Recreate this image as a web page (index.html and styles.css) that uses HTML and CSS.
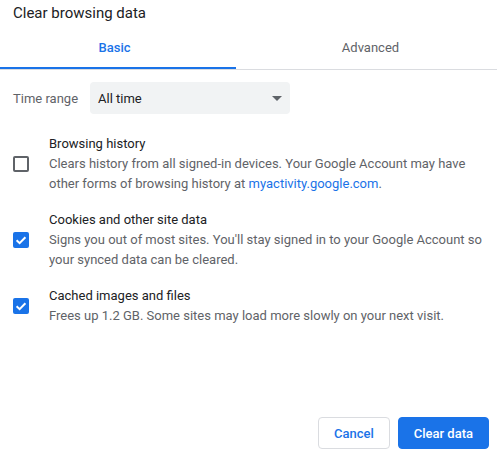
FILE: index.html
```html
<!DOCTYPE html>
<html>
<head>
<meta charset="utf-8">
<link rel="stylesheet" href="styles.css">
</head>
<body>
<div class="dialog">
  <div class="title">Clear browsing data</div>
  <div class="tabs">
    <div class="tab tab-basic active">Basic</div>
    <div class="tab tab-adv">Advanced</div>
  </div>
  <div class="content">
    <div class="time-row">
      <span class="time-label">Time range</span>
      <div class="select">
        <span>All time</span>
        <svg class="arrow" width="10" height="5" viewBox="0 0 10 5"><path d="M0 0h10L5 5z" fill="#5f6368"/></svg>
      </div>
    </div>
    <div class="item">
      <div class="cb"></div>
      <div class="text">
        <div class="item-title">Browsing history</div>
        <div class="desc">Clears history from all signed-in devices. Your Google Account may have other forms of browsing history at <span class="link">myactivity.google.com</span>.</div>
      </div>
    </div>
    <div class="item">
      <div class="cb checked"><svg width="16" height="16" viewBox="0 0 16 16"><path d="M3.6 8.2l3 2.9 5.8-5.9" fill="none" stroke="#fff" stroke-width="2"/></svg></div>
      <div class="text">
        <div class="item-title">Cookies and other site data</div>
        <div class="desc">Signs you out of most sites. You'll stay signed in to your Google Account so your synced data can be cleared.</div>
      </div>
    </div>
    <div class="item">
      <div class="cb checked"><svg width="16" height="16" viewBox="0 0 16 16"><path d="M3.6 8.2l3 2.9 5.8-5.9" fill="none" stroke="#fff" stroke-width="2"/></svg></div>
      <div class="text">
        <div class="item-title">Cached images and files</div>
        <div class="desc">Frees up 1.2 GB. Some sites may load more slowly on your next visit.</div>
      </div>
    </div>
  </div>
  <div class="buttons">
    <button class="btn btn-cancel">Cancel</button>
    <button class="btn btn-primary">Clear data</button>
  </div>
</div>
</body>
</html>
```
FILE: styles.css
```css
html, body {
  margin: 0;
  padding: 0;
  background: #fff;
}
body {
  font-family: Roboto, "Liberation Sans", sans-serif;
  font-size: 13px;
  color: #202124;
}
.dialog {
  height: 464px;
  display: flex;
  flex-direction: column;
}
.title {
  font-size: 15px;
  line-height: 20px;
  padding: 3px 13px 5px;
  color: #202124;
}
.tabs {
  display: grid;
  grid-template-columns: 236px 1fr;
  border-bottom: 1px solid #dadce0;
}
.tab {
  height: 39px;
  line-height: 39px;
  text-align: center;
  font-weight: 400;
  color: #5f6368;
  border-bottom: 2px solid transparent;
}
.tab-basic {
  padding-right: 7px;
}
.tab-adv {
  padding-left: 8px;
}
.tab.active {
  color: #1a73e8;
  font-weight: 500;
  border-bottom-color: #1a73e8;
}
.content {
  padding: 12px 13px 0;
  flex: 1;
}
.time-row {
  display: flex;
  align-items: center;
}
.time-label {
  color: #5f6368;
  width: 77px;
}
.select {
  width: 200px;
  height: 32px;
  box-sizing: border-box;
  background: #f1f3f4;
  border-radius: 4px;
  padding: 0 8px;
  display: flex;
  align-items: center;
  justify-content: space-between;
  color: #202124;
}
.item {
  display: flex;
  align-items: center;
  gap: 20px;
  margin-top: 16px;
}
.time-row + .item {
  margin-top: 20px;
}
.cb {
  width: 16px;
  height: 16px;
  box-sizing: border-box;
  border: 2px solid #5f6368;
  border-radius: 2px;
  flex: none;
}
.cb.checked {
  border: none;
  background: #1a73e8;
}
.cb svg {
  display: block;
}
.text {
  line-height: 20px;
}
.item-title {
  color: #202124;
}
.desc {
  color: #5f6368;
}
.link {
  color: #1a73e8;
}
.buttons {
  display: flex;
  justify-content: flex-end;
  gap: 8px;
  padding: 0 8px 15px 0;
}
.btn {
  height: 32px;
  font-family: Roboto, "Liberation Sans", sans-serif;
  font-size: 13px;
  font-weight: 500;
  padding: 0 15px;
  border-radius: 4px;
  cursor: pointer;
}
.btn-cancel {
  background: #fff;
  border: 1px solid #dadce0;
  color: #1a73e8;
}
.btn-primary {
  background: #1a73e8;
  border: 1px solid #1a73e8;
  color: #fff;
}
```
